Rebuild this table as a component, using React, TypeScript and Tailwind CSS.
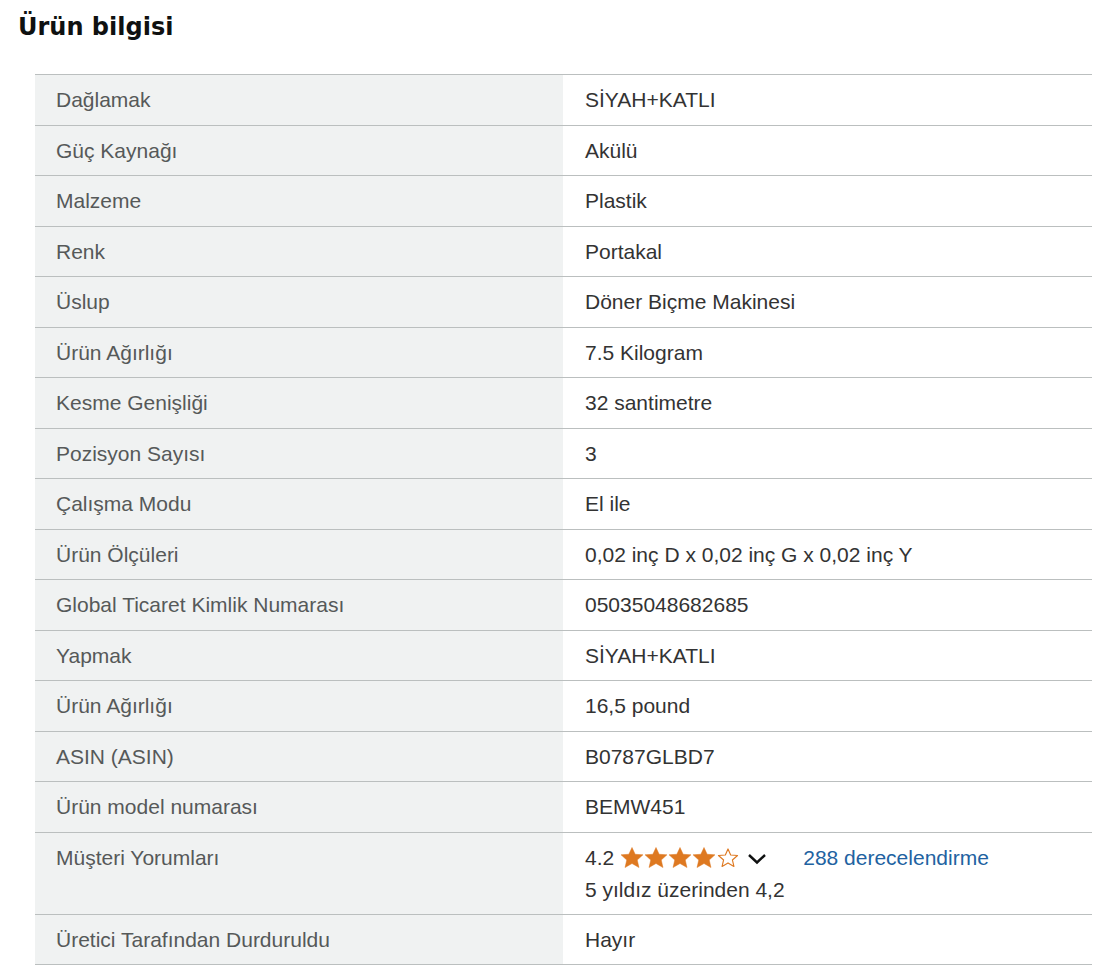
const rows: [string, string][] = [
  ["Dağlamak", "SİYAH+KATLI"],
  ["Güç Kaynağı", "Akülü"],
  ["Malzeme", "Plastik"],
  ["Renk", "Portakal"],
  ["Üslup", "Döner Biçme Makinesi"],
  ["Ürün Ağırlığı", "7.5 Kilogram"],
  ["Kesme Genişliği", "32 santimetre"],
  ["Pozisyon Sayısı", "3"],
  ["Çalışma Modu", "El ile"],
  ["Ürün Ölçüleri", "0,02 inç D x 0,02 inç G x 0,02 inç Y"],
  ["Global Ticaret Kimlik Numarası", "05035048682685"],
  ["Yapmak", "SİYAH+KATLI"],
  ["Ürün Ağırlığı", "16,5 pound"],
  ["ASIN (ASIN)", "B0787GLBD7"],
  ["Ürün model numarası", "BEMW451"],
];

const Star = ({ filled }: { filled: boolean }) => (
  <svg width="24" height="21" viewBox="0 0 24 22" className="shrink-0">
    <polygon
      points={
        filled
          ? "12,0.5 15.3,7.6 23.5,8.2 17.5,13.6 19.3,21.5 12,17.3 4.7,21.5 6.5,13.6 0.5,8.2 8.7,7.6"
          : "12,2 14.8,8.4 22,8.9 16.6,13.6 18.2,20.4 12,16.7 5.8,20.4 7.4,13.6 2,8.9 9.2,8.4"
      }
      fill={filled ? "#de7921" : "none"}
      stroke="#de7921"
      strokeWidth={filled ? 0.5 : 1.2}
      strokeLinejoin="round"
    />
  </svg>
);

const Row = ({ label, children, tall }: { label: string; children: React.ReactNode; tall?: boolean }) => (
  <div className={`flex border-t border-[#bbbfbf] ${tall ? "h-[82px]" : "h-[50.5px]"}`}>
    <div className="w-[528px] shrink-0 bg-[#f0f2f2] pl-[21px] pt-[13px] text-[#565959] leading-[24px]">
      {label}
    </div>
    <div className="flex-1 pl-[22px] pt-[13px] text-[#333333] leading-[24px]">
      {children}
    </div>
  </div>
);

export default function App() {
  return (
    <div className="min-h-[975px] bg-white" style={{ fontFamily: '"Liberation Sans", Arial, sans-serif' }}>
      <h1
        className="pl-[18px] pt-[13px] text-[24px] font-bold leading-[28px] text-[#0f1111]"
        style={{ fontFamily: '"DejaVu Sans", Verdana, sans-serif' }}
      >
        Ürün bilgisi
      </h1>

      <div className="ml-[35px] mt-[33px] w-[1057px] border-b border-[#bbbfbf] text-[21px]">
        {rows.map(([label, value], i) => (
          <Row key={i} label={label}>
            {value}
          </Row>
        ))}

        <Row label="Müşteri Yorumları" tall>
          <div className="flex items-center">
            <span>4.2</span>
            <span className="ml-[6px] flex">
              <Star filled />
              <Star filled />
              <Star filled />
              <Star filled />
              <Star filled={false} />
            </span>
            <svg width="20" height="12" viewBox="0 0 20 12" className="ml-[7px] mt-[3px]">
              <polyline points="2,2 10,9.5 18,2" fill="none" stroke="#0f1111" strokeWidth="2.4" />
            </svg>
            <span className="ml-[36px] text-[#2162a1]">288 derecelendirme</span>
          </div>
          <div className="mt-[8px]">5 yıldız üzerinden 4,2</div>
        </Row>

        <Row label="Üretici Tarafından Durduruldu">Hayır</Row>
      </div>
    </div>
  );
}
